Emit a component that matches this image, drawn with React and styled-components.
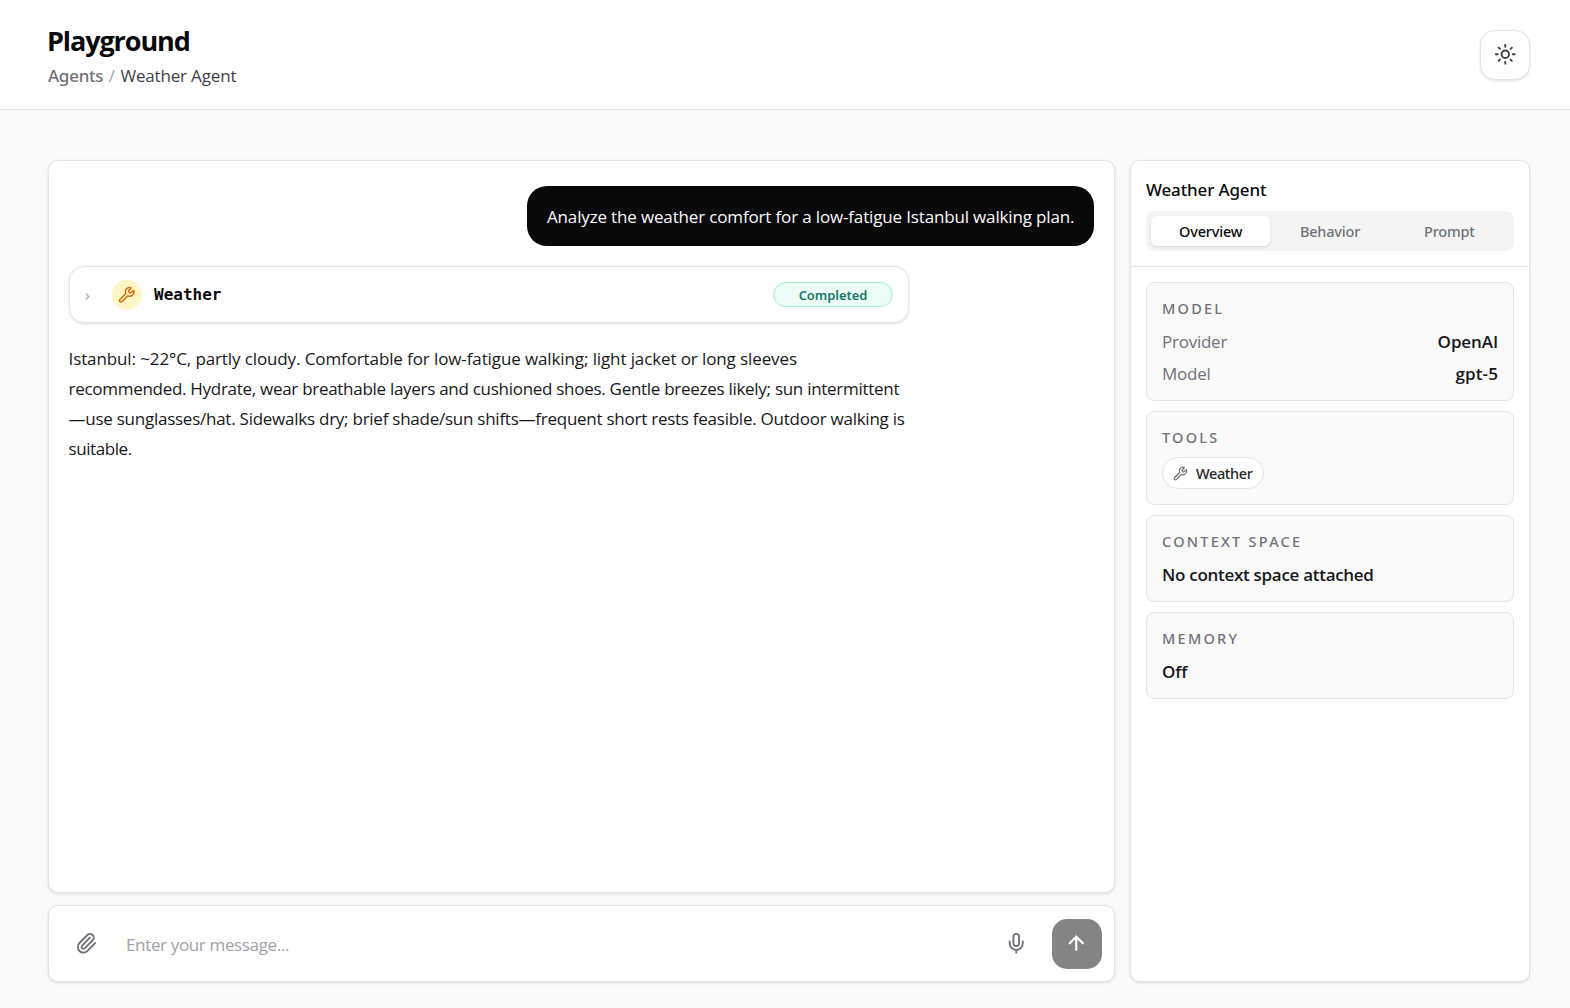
import React, { useState } from "react";
import styled, { createGlobalStyle } from "styled-components";
import { ArrowUp, Mic, Paperclip, Sun, Wrench } from "lucide-react";

const GlobalStyle = createGlobalStyle`
  * {
    box-sizing: border-box;
  }
  body {
    margin: 0;
    background: #fafafa;
    color: #18181b;
    font-family: "Open Sans", "Noto Sans", sans-serif;
    font-size: 17px;
  }
  button, input {
    font: inherit;
  }
`;

const medium = `
  font-family: "Noto Sans", "Open Sans", sans-serif;
  font-weight: 500;
`;

const Page = styled.div`
  display: flex;
  flex-direction: column;
  height: 1008px;
`;

const Header = styled.header`
  display: flex;
  align-items: center;
  justify-content: space-between;
  flex: none;
  height: 110px;
  padding: 0 40px 0 48px;
  background: #fff;
  border-bottom: 1px solid #e4e4e7;
`;

const Title = styled.h1`
  margin: 0 0 0 -1px;
  font-size: 27px;
  font-weight: 700;
  line-height: 38px;
  letter-spacing: -1.1px;
  color: #09090b;
`;

const Crumbs = styled.nav`
  display: flex;
  gap: 5.5px;
  line-height: 25px;
  margin-top: 3px;
  color: #3f3f46;
  letter-spacing: -0.17px;
`;

const CrumbLink = styled.span`
  ${medium}
  color: #71717a;
  letter-spacing: -0.26px;
`;

const Slash = styled.span`
  color: #a1a1aa;
`;

const ThemeButton = styled.button`
  display: flex;
  align-items: center;
  justify-content: center;
  width: 50px;
  height: 50px;
  padding: 0;
  background: #fff;
  color: #3f3f46;
  border: 1px solid #e4e4e7;
  border-radius: 15px;
  box-shadow: 0 1px 3px rgba(0, 0, 0, 0.12);
`;

const Main = styled.main`
  display: grid;
  grid-template-columns: 1fr 400px;
  gap: 15px;
  flex: 1;
  padding: 50px 40px 26px 48px;
`;

const Panel = styled.section`
  background: #fff;
  border: 1px solid #e4e4e7;
  border-radius: 10px;
  box-shadow: 0 1px 3px rgba(0, 0, 0, 0.12);
`;

const ChatColumn = styled.div`
  display: flex;
  flex-direction: column;
  gap: 12px;
`;

const Messages = styled(Panel)`
  display: flex;
  flex-direction: column;
  flex: 1;
  padding: 25px 20px;
`;

const UserBubble = styled.div`
  align-self: flex-end;
  width: 567px;
  padding: 16px 20px 14px;
  border-radius: 20px;
  background: #09090b;
  color: #fafafa;
  line-height: 30px;
  letter-spacing: -0.155px;
  white-space: nowrap;
`;

const ToolCall = styled.div`
  display: flex;
  align-items: center;
  width: 840px;
  height: 57px;
  margin-top: 20px;
  padding: 0 15px;
  border: 1px solid #e4e4e7;
  border-radius: 15px;
  box-shadow: 0 1px 3px rgba(0, 0, 0, 0.14);
`;

const Chevron = styled.span`
  width: 27px;
  font-size: 16px;
  line-height: 20px;
  color: #a1a1aa;
`;

const ToolIcon = styled.span`
  display: flex;
  align-items: center;
  justify-content: center;
  width: 30px;
  height: 30px;
  border-radius: 50%;
  background: #fef6c4;
  color: #d0700f;
`;

const ToolName = styled.span`
  flex: 1;
  margin-left: 12px;
  font-family: "DejaVu Sans Mono", monospace;
  font-size: 16px;
  font-weight: 700;
  color: #09090b;
`;

const Status = styled.span`
  width: 120px;
  height: 25px;
  border: 1px solid #a4f4cf;
  border-radius: 13px;
  background: #ecfdf5;
  color: #1b766c;
  font-family: "Noto Sans", sans-serif;
  font-size: 13px;
  font-weight: 600;
  line-height: 24px;
  letter-spacing: -0.06px;
  text-align: center;
`;

const Answer = styled.p`
  margin: 21px 0 0 -0.5px;
  line-height: 30px;
`;

const AnswerLine = styled.span`
  display: block;
  white-space: nowrap;
  letter-spacing: ${(p) => p.$tracking}px;
`;

const Composer = styled(Panel)`
  display: flex;
  align-items: center;
  height: 77px;
  padding: 0 12px 0 26px;
  color: #71717a;
`;

const MessageInput = styled.input`
  flex: 1;
  margin-left: 28.5px;
  padding: 2px 0 0;
  border: 0;
  outline: 0;
  background: none;
  letter-spacing: -0.35px;
  &::placeholder {
    color: #a1a1aa;
    opacity: 1;
  }
`;

const SendButton = styled.button`
  display: flex;
  align-items: center;
  justify-content: center;
  width: 50px;
  height: 50px;
  margin-left: 25px;
  padding: 0 1px 0 0;
  border: 0;
  border-radius: 15px;
  background: #848485;
  color: #fff;
`;

const SidebarHead = styled.div`
  padding: 15px;
  border-bottom: 1px solid #e4e4e7;
`;

const AgentName = styled.h2`
  ${medium}
  margin: 0;
  font-size: 17px;
  line-height: 27px;
  letter-spacing: -0.15px;
  color: #09090b;
`;

const Tabs = styled.div`
  display: grid;
  grid-template-columns: repeat(3, 1fr);
  height: 40px;
  margin-top: 8px;
  padding: 5px;
  border-radius: 8px;
  background: #f4f4f5;
`;

const Tab = styled.button`
  ${medium}
  padding: 0;
  border: 0;
  border-radius: 6px;
  background: ${(p) => (p.$active ? "#fff" : "transparent")};
  box-shadow: ${(p) => (p.$active ? "0 1px 3px rgba(0, 0, 0, 0.14)" : "none")};
  color: ${(p) => (p.$active ? "#09090b" : "#71717a")};
  font-size: 14.5px;
  letter-spacing: -0.2px;
`;

const Cards = styled.div`
  display: flex;
  flex-direction: column;
  gap: 10px;
  padding: 15px;
`;

const Card = styled.div`
  display: flex;
  flex-direction: column;
  align-items: flex-start;
  padding: 15px;
  border: 1px solid #e4e4e7;
  border-radius: 8px;
  background: #fafafa;
`;

const CardLabel = styled.div`
  ${medium}
  margin-bottom: 10px;
  color: #71717a;
  font-size: 14.5px;
  line-height: 20px;
  letter-spacing: 2.25px;
  text-transform: uppercase;
`;

const Row = styled.div`
  display: flex;
  justify-content: space-between;
  align-self: stretch;
  padding-top: 2px;
  line-height: 23px;
  color: #71717a;
  letter-spacing: -0.25px;
  & + & {
    margin-top: 7px;
  }
`;

const Value = styled.span`
  color: #18181b;
  font-weight: 600;
  letter-spacing: ${(p) => p.$tracking || 0}px;
`;

const CardText = styled(Value)`
  padding-top: 2px;
  line-height: 23px;
`;

const Chip = styled.span`
  ${medium}
  display: flex;
  align-items: center;
  gap: 8px;
  width: 102px;
  height: 32px;
  padding-left: 10px;
  border: 1px solid #e4e4e7;
  border-radius: 16px;
  background: #fff;
  color: #27272a;
  font-size: 14.5px;
  letter-spacing: -0.38px;
  svg {
    color: #71717a;
  }
`;

const answer = [
  { text: "Istanbul: ~22°C, partly cloudy. Comfortable for low-fatigue walking; light jacket or long sleeves", tracking: -0.11 },
  { text: "recommended. Hydrate, wear breathable layers and cushioned shoes. Gentle breezes likely; sun intermittent", tracking: -0.285 },
  { text: "—use sunglasses/hat. Sidewalks dry; brief shade/sun shifts—frequent short rests feasible. Outdoor walking is", tracking: -0.25 },
  { text: "suitable.", tracking: -0.42 },
];

const tabs = ["Overview", "Behavior", "Prompt"];

export default () => {
  const [tab, setTab] = useState("Overview");

  return (
    <>
      <GlobalStyle />
      <Page>
        <Header>
          <div>
            <Title>Playground</Title>
            <Crumbs>
              <CrumbLink>Agents</CrumbLink>
              <Slash>/</Slash>
              <span>Weather Agent</span>
            </Crumbs>
          </div>
          <ThemeButton aria-label="Toggle theme">
            <Sun size={22.5} />
          </ThemeButton>
        </Header>

        <Main>
          <ChatColumn>
            <Messages>
              <UserBubble>Analyze the weather comfort for a low-fatigue Istanbul walking plan.</UserBubble>
              <ToolCall>
                <Chevron>›</Chevron>
                <ToolIcon>
                  <Wrench size={17.5} />
                </ToolIcon>
                <ToolName>Weather</ToolName>
                <Status>Completed</Status>
              </ToolCall>
              <Answer>
                {answer.map((line) => (
                  <AnswerLine key={line.text} $tracking={line.tracking}>
                    {line.text}
                  </AnswerLine>
                ))}
              </Answer>
            </Messages>

            <Composer>
              <Paperclip size={22.5} />
              <MessageInput placeholder="Enter your message..." />
              <Mic size={22.5} />
              <SendButton aria-label="Send">
                <ArrowUp size={22.5} strokeWidth={2.4} />
              </SendButton>
            </Composer>
          </ChatColumn>

          <Panel as="aside">
            <SidebarHead>
              <AgentName>Weather Agent</AgentName>
              <Tabs>
                {tabs.map((name) => (
                  <Tab key={name} $active={name === tab} onClick={() => setTab(name)}>
                    {name}
                  </Tab>
                ))}
              </Tabs>
            </SidebarHead>
            <Cards>
              <Card>
                <CardLabel>Model</CardLabel>
                <Row>
                  Provider <Value $tracking={-0.1}>OpenAI</Value>
                </Row>
                <Row>
                  Model <Value $tracking={0.1}>gpt-5</Value>
                </Row>
              </Card>
              <Card>
                <CardLabel>Tools</CardLabel>
                <Chip>
                  <Wrench size={15} />
                  Weather
                </Chip>
              </Card>
              <Card>
                <CardLabel>Context space</CardLabel>
                <CardText $tracking={-0.29}>No context space attached</CardText>
              </Card>
              <Card>
                <CardLabel>Memory</CardLabel>
                <CardText $tracking={-0.1}>Off</CardText>
              </Card>
            </Cards>
          </Panel>
        </Main>
      </Page>
    </>
  );
};
